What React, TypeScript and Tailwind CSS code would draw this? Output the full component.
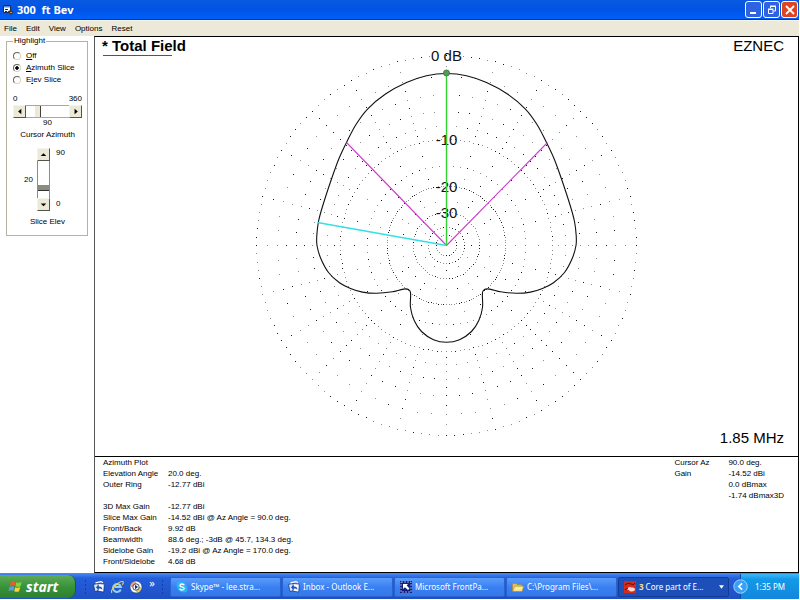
import { useState } from 'react';
import type { ReactNode } from 'react';

const OUTER_RADIUS = 190;

// log scale: every 2 dB shrinks the radius by 0.89
const dbToRadius = (db: number) => OUTER_RADIUS * Math.pow(0.89, db / 2);

// [dB below outer ring, angle step in degrees]
const RINGS: [number, number][] = [
  [0, 2.5],
  [2, 5],
  [4, 5],
  [6, 5],
  [8, 5],
  [10, 2.5],
  [15, 5],
  [20, 2.5],
  [25, 15],
  [30, 5],
  [40, 10],
  [50, 15],
];

const SPOKE_DBS = [1, 2, 3, 4, 5, 6, 7, 8, 9, 12.5, 15, 17.5];
const AXIS_DBS = [22.5, 25, 35];

// left half of the pattern, from the top down to the back lobe
const LOBE: [number, number][] = [
  [0, -172], [-20, -169.8], [-40, -163], [-61, -151.5], [-78.7, -136.7], [-90.5, -121],
  [-100, -103], [-107.5, -87], [-115, -66.5], [-124, -39], [-128, -24], [-129.7, -10],
  [-129.5, 0], [-125.7, 13], [-118, 27], [-107, 37.3], [-96, 43], [-84, 46.6], [-70, 47.8],
  [-54, 46.3], [-43, 43.6], [-38, 43.9], [-36, 47], [-36, 62], [-32.3, 75], [-25, 86],
  [-13, 94.2], [0, 96.8],
];

// Catmull-Rom through the points, tangents scaled by chord length
function buildLobePath() {
  const right = LOBE.slice(1, -1).reverse().map(([x, y]) => [-x, y]);
  const pts = [...LOBE, ...right];
  const n = pts.length;
  const at = (i: number) => pts[(i + n) % n];
  const dist = (a: number[], b: number[]) => Math.hypot(a[0] - b[0], a[1] - b[1]);
  const tangent = (i: number) => {
    const span = dist(at(i - 1), at(i)) + dist(at(i), at(i + 1));
    return [(at(i + 1)[0] - at(i - 1)[0]) / span, (at(i + 1)[1] - at(i - 1)[1]) / span];
  };
  let d = `M${pts[0][0]} ${pts[0][1]}`;
  for (let i = 0; i < n; i++) {
    const a = at(i);
    const b = at(i + 1);
    const len = dist(a, b) / 3;
    const ta = tangent(i);
    const tb = tangent(i + 1);
    d += `C${a[0] + ta[0] * len} ${a[1] + ta[1] * len} ${b[0] - tb[0] * len} ${b[1] - tb[1] * len} ${b[0]} ${b[1]}`;
  }
  return d + 'Z';
}

function buildDots() {
  const seen = new Set<string>();
  let dark = '';
  let light = '';
  const add = (r: number, deg: number) => {
    const a = (deg * Math.PI) / 180;
    const x = Math.round(r * Math.cos(a));
    const y = Math.round(r * Math.sin(a));
    const key = `${x},${y}`;
    if (seen.has(key)) return;
    seen.add(key);
    const dot = `M${x - 0.5} ${y - 0.5}h1v1h-1z`;
    if ((x * 7 + y * 13 + 4000) % 5 < 2) dark += dot;
    else light += dot;
  };
  RINGS.forEach(([db, step]) => {
    for (let deg = 0; deg < 360; deg += step) add(dbToRadius(db), deg);
  });
  for (let deg = 0; deg < 360; deg += 15) {
    SPOKE_DBS.forEach((db) => add(dbToRadius(db), deg));
  }
  for (let deg = 0; deg < 360; deg += 30) {
    AXIS_DBS.forEach((db) => add(dbToRadius(db), deg));
  }
  return { dark, light };
}

const DOTS = buildDots();
const LOBE_PATH = buildLobePath();

const PLOT_LABELS = [
  { text: '0 dB', y: -185 },
  { text: '-10', y: -101 },
  { text: '-20', y: -54 },
  { text: '-30', y: -28 },
];

function PolarPlot() {
  return (
    <svg viewBox="-351.5 -208.5 703 419" className="block w-full h-full" role="img" aria-label="Azimuth plot">
      <path d={DOTS.dark} fill="#1a1a1a" shapeRendering="crispEdges" />
      <path d={DOTS.light} fill="#8c8c8c" shapeRendering="crispEdges" />
      <path d={LOBE_PATH} fill="none" stroke="#111" strokeWidth="1.1" />
      <path d="M0 0L-100 -103M0 0L101 -103" stroke="#cc3fcc" strokeWidth="1.1" />
      <path d="M0 0L-129 -23" stroke="#35dfe6" strokeWidth="1.3" />
      {PLOT_LABELS.map((label) => (
        <text key={label.text} x="0" y={label.y} textAnchor="middle" fontSize="15" fill="#111">
          {label.text}
        </text>
      ))}
      <path d="M0 0V-172" stroke="#32d232" strokeWidth="1.4" />
      <circle cx="0" cy="-172.5" r="3" fill="#3fa84a" stroke="#5c6b5c" />
    </svg>
  );
}

function AppIcon() {
  return (
    <svg viewBox="0 0 12 12" className="w-3 h-3">
      <path d="M1.500 1.500h7v7h-7z" fill="#fff" stroke="#1c2a55" />
      <path d="M2 2h6v1.500H2z" fill="#5b84dc" />
      <path d="M3 5h3v1H3zM3 7h2v1H3z" fill="#222" />
      <path d="M5.500 7.500l3-1.500 3 2-2.500 3z" fill="#2b3c3c" />
      <path d="M8 8h2v1H8z" fill="#d84" />
    </svg>
  );
}

function TitleBar() {
  const btn = 'flex items-center justify-center w-[17px] h-[17px] rounded-[3px] border border-white';
  return (
    <header className="flex items-center h-5 shrink-0 pl-[2px] pr-px bg-linear-to-b from-[#0a5ae0] via-[#0153e4] to-[#0060fb] border-b border-[#0239a8]">
      <AppIcon />
      <h1 className="ml-[3px] flex-1 whitespace-pre text-[11px] leading-4 font-bold text-white font-['Open_Sans',sans-serif]">300  ft Bev</h1>
      <div className="flex gap-px">
        <button type="button" aria-label="Minimize" className={`${btn} bg-[#2f62e0]`}>
          <svg viewBox="0 0 14 14" className="w-[14px] h-[14px]"><path d="M3 9h6v2H3z" fill="#fff" /></svg>
        </button>
        <button type="button" aria-label="Restore" className={`${btn} bg-[#2f62e0]`}>
          <svg viewBox="0 0 14 14" className="w-[14px] h-[14px]" fill="none" stroke="#fff">
            <path d="M5.500 5V3.500h5v4.500h-2M5 3h6" />
            <path d="M3.500 6.500h4.500v4h-4.500zM3 6h5.500" />
          </svg>
        </button>
        <button type="button" aria-label="Close" className={`${btn} bg-[#dd4522]`}>
          <svg viewBox="0 0 14 14" className="w-[14px] h-[14px]"><path d="M3 3l8 8M11 3l-8 8" stroke="#fff" strokeWidth="1.8" /></svg>
        </button>
      </div>
    </header>
  );
}

function MenuBar() {
  return (
    <nav className="flex items-center gap-[9px] h-4 shrink-0 pl-1 bg-[#ece9d8] border-t border-[#f6f5ee] text-[8px] leading-[10px]">
      {['File', 'Edit', 'View', 'Options', 'Reset'].map((item) => (
        <button key={item} type="button">{item}</button>
      ))}
    </nav>
  );
}

const ARROWS = {
  left: 'M8 3v6L4.500 6z',
  right: 'M5 3v6L8.500 6z',
  up: 'M3 7.500h6L6 4.500z',
  down: 'M3 5h6L6 8z',
};

function ArrowButton({ dir, label }: { dir: keyof typeof ARROWS; label: string }) {
  return (
    <button
      type="button"
      aria-label={label}
      className="w-[13px] h-[13px] shrink-0 bg-[#ece9d8] border border-t-[#f6f4ea] border-l-[#f6f4ea] border-b-[#55534a] border-r-[#55534a]"
    >
      <svg viewBox="0 0 12 12" className="block w-[11px] h-[11px]"><path d={ARROWS[dir]} fill="#000" /></svg>
    </button>
  );
}

const MODES = [
  { id: 'off', label: <><u>O</u>ff</> },
  { id: 'azimuth', label: <><u>A</u>zimuth Slice</> },
  { id: 'elev', label: <>E<u>l</u>ev Slice</> },
];

function Sidebar() {
  const [mode, setMode] = useState('azimuth');
  const [azimuth, setAzimuth] = useState(90);
  const [elev, setElev] = useState(20);

  return (
    <aside className="w-[94px] shrink-0 px-[6px] text-[8px] leading-[10px]">
      <fieldset className="w-full min-w-0 border border-[#b5b2a0] pl-[6px] pr-[5px] pb-2">
        <legend className="px-px">Highlight</legend>
        <div className="pt-1">
          {MODES.map((item) => (
            <label key={item.id} className="flex items-center gap-[5px] h-3 whitespace-nowrap">
              <input
                type="radio"
                name="highlight"
                checked={mode === item.id}
                onChange={() => setMode(item.id)}
                className="appearance-none w-2 h-2 shrink-0 rounded-full bg-white border border-t-[#66645c] border-l-[#66645c] border-[#d8d5c4] checked:bg-[radial-gradient(#000_35%,#fff_45%)]"
              />
              <span>{item.label}</span>
            </label>
          ))}
        </div>

        <div className="flex justify-between mt-2">
          <span>0</span>
          <span>360</span>
        </div>
        <div className="flex mt-px">
          <ArrowButton dir="left" label="Decrease azimuth" />
          <input
            id="cursor-azimuth"
            type="range"
            min="0"
            max="360"
            value={azimuth}
            onChange={(e) => setAzimuth(Number(e.target.value))}
            className="appearance-none flex-1 w-0 min-w-0 h-[13px] bg-white border-t border-b border-[#aca899] [&::-webkit-slider-thumb]:appearance-none [&::-webkit-slider-thumb]:w-[6px] [&::-webkit-slider-thumb]:h-[11px] [&::-webkit-slider-thumb]:bg-[#ece9d8] [&::-webkit-slider-thumb]:border-r [&::-webkit-slider-thumb]:border-[#44423a]"
          />
          <ArrowButton dir="right" label="Increase azimuth" />
        </div>
        <div className="text-center">{azimuth}</div>
        <label htmlFor="cursor-azimuth" className="block mt-[2px] text-center whitespace-nowrap">Cursor Azimuth</label>

        <div className="grid grid-cols-[24px_13px_1fr] mt-2">
          <span className="self-center pr-1 text-right">{elev}</span>
          <div className="flex flex-col h-[63px]">
            <ArrowButton dir="up" label="Increase elevation" />
            <input
              id="slice-elev"
              type="range"
              min="0"
              max="90"
              value={elev}
              onChange={(e) => setElev(Number(e.target.value))}
              className="appearance-none [writing-mode:vertical-lr] [direction:rtl] w-[13px] flex-1 h-0 min-h-0 bg-white border-l border-r border-[#8f8c80] [&::-webkit-slider-thumb]:appearance-none [&::-webkit-slider-thumb]:w-[11px] [&::-webkit-slider-thumb]:h-[6px] [&::-webkit-slider-thumb]:bg-[#8b8a84] [&::-webkit-slider-thumb]:border-b [&::-webkit-slider-thumb]:border-[#33322c]"
            />
            <ArrowButton dir="down" label="Decrease elevation" />
          </div>
          <div className="flex flex-col justify-between pl-[6px] pb-[2px]">
            <span>90</span>
            <span>0</span>
          </div>
        </div>
        <label htmlFor="slice-elev" className="block mt-[6px] text-center">Slice Elev</label>
      </fieldset>
    </aside>
  );
}

const LEFT_ROWS = [
  ['Azimuth Plot', ''],
  ['Elevation Angle', '20.0 deg.'],
  ['Outer Ring', '-12.77 dBi'],
  ['', ''],
  ['3D Max Gain', '-12.77 dBi'],
  ['Slice Max Gain', '-14.52 dBi @ Az Angle = 90.0 deg.'],
  ['Front/Back', '9.92 dB'],
  ['Beamwidth', '88.6 deg.; -3dB @ 45.7, 134.3 deg.'],
  ['Sidelobe Gain', '-19.2 dBi @ Az Angle = 170.0 deg.'],
  ['Front/Sidelobe', '4.68 dB'],
];

const RIGHT_ROWS = [
  ['Cursor Az', '90.0 deg.'],
  ['Gain', '-14.52 dBi'],
  ['', '0.0 dBmax'],
  ['', '-1.74 dBmax3D'],
];

function DataTable({ rows, headWidth }: { rows: string[][]; headWidth: string }) {
  return (
    <table className="self-start whitespace-nowrap text-left">
      <tbody>
        {rows.map(([name, value], i) => (
          <tr key={i} className="h-[11px]">
            <th scope="row" className={`p-0 font-normal ${headWidth}`}>{name}</th>
            <td className="p-0">{value}</td>
          </tr>
        ))}
      </tbody>
    </table>
  );
}

function PlotPanel() {
  return (
    <main className="flex flex-col flex-1 min-w-0 border border-black border-l-[#555]">
      <section className="relative flex-1 min-h-0">
        <PolarPlot />
        <h2 className="absolute left-[7px] top-0 pr-4 text-[15px] leading-[18px] font-bold">
          * Total Field
        </h2>
        <hr className="absolute left-2 top-[18px] w-[69px] border-[#555]" />
        <div className="absolute right-[14px] top-0 text-[15px] leading-[18px]">EZNEC</div>
        <div className="absolute right-[14px] bottom-[9px] text-[15px] leading-[18px]">1.85 MHz</div>
      </section>
      <section className="flex justify-between pl-2 pr-[14px] pb-[5px] border-t border-black text-[8px] leading-[11px]">
        <DataTable rows={LEFT_ROWS} headWidth="w-[65px] min-w-[65px]" />
        <DataTable rows={RIGHT_ROWS} headWidth="w-[54px] min-w-[54px]" />
      </section>
    </main>
  );
}

function WindowsFlag() {
  return (
    <svg viewBox="0 0 15 16" className="w-[15px] h-[15px]">
      <path d="M2.500 3.200Q5 1.500 7.500 3L6.500 7.300Q4 6 1.300 7.500z" fill="#ee5a2a" />
      <path d="M8.400 3.400Q11 4.800 14 3.200L12.800 7.600Q10 9 7.400 7.700z" fill="#8ccf3c" />
      <path d="M1.100 8.400Q3.700 7 6.300 8.300L5.200 12.600Q2.800 11.300 0 12.800z" fill="#5a9af0" />
      <path d="M7.200 8.700Q9.800 10 12.500 8.600L11.300 13Q8.700 14.400 6.100 13z" fill="#fbd038" />
    </svg>
  );
}

function OutlookIcon() {
  return (
    <svg viewBox="0 0 12 12" className="w-3 h-3 shrink-0">
      <path d="M.5 3.500L6 2.200 7.500 9 2 10.500z" fill="#dce9fb" stroke="#0d2f7c" strokeWidth=".7" />
      <path d="M5 2.500l6.300.6-.6 8-5.700-1z" fill="#fff" stroke="#0d2f7c" strokeWidth=".7" />
      <path d="M2.500 1.800L8 .6l2 1.200" fill="none" stroke="#fff" strokeWidth="1.200" />
      <path d="M2.800 6.300L5.800 4v1.500q3.400-.4 3.600 3.200Q8 7.300 5.800 7.500V9z" fill="#1b55c4" />
    </svg>
  );
}

function ExplorerIcon() {
  return (
    <svg viewBox="0 0 14 14" className="w-[14px] h-[14px]" fill="none">
      <path d="M10.700 9.500A4 4 0 1 1 10.900 7H4.500" stroke="#8ed2fc" strokeWidth="2" />
      <path d="M2 12.800C-.5 10 9 .8 12.800 1.500q1.200.6-.5 3.300" stroke="#f6cf4a" strokeWidth="1.100" />
    </svg>
  );
}

function MediaIcon() {
  return (
    <svg viewBox="0 0 14 14" className="w-[14px] h-[14px]">
      <circle cx="7" cy="7" r="6" fill="#f6f8fb" stroke="#1a3a80" strokeWidth=".6" />
      <path d="M7 1.500A5.500 5.500 0 0 0 1.500 7H4a3 3 0 0 1 3-3z" fill="#f0a070" />
      <path d="M12.500 7A5.500 5.500 0 0 1 7 12.500V10a3 3 0 0 0 3-3z" fill="#e9c95c" />
      <circle cx="7" cy="7" r="3.200" fill="#fff" stroke="#223" strokeWidth=".8" />
      <path d="M6 4.800v4.400L9 7z" fill="#15307a" />
    </svg>
  );
}

function SkypeIcon() {
  return (
    <svg viewBox="0 0 12 12" className="w-3 h-3 shrink-0">
      <circle cx="4" cy="4" r="3.500" fill="#27b4f4" />
      <circle cx="8" cy="8" r="3.500" fill="#27b4f4" />
      <circle cx="6" cy="6" r="4.800" fill="#27b4f4" />
      <path d="M8.200 4.200Q7.700 3 6 3T4 4.400Q4 5.500 6 5.900T8.200 7.500Q8 9 6 9T3.800 7.700" fill="none" stroke="#fff" strokeWidth="1.400" />
    </svg>
  );
}

function FrontPageIcon() {
  return (
    <svg viewBox="0 0 12 12" className="w-3 h-3 shrink-0">
      <path d="M0 0h12v12H0z" fill="#10207c" />
      <path d="M1 1h10v10H1z" fill="none" stroke="#b9c8f4" strokeWidth=".8" strokeDasharray="2 1" />
      <path d="M3 3h5L6.700 4.500 9.500 7.500 8 9 4.900 6.200 3 8z" fill="#fff" />
    </svg>
  );
}

function FolderIcon() {
  return (
    <svg viewBox="0 0 12 12" className="w-3 h-3 shrink-0">
      <path d="M.5 10V2.500h3.800l1 1.300h4.700V10z" fill="#e9c04e" stroke="#a8842a" strokeWidth=".6" />
      <path d="M.7 10.300L2.800 5.300H11.700L10 10.300z" fill="#fdeb96" stroke="#b8922e" strokeWidth=".6" />
    </svg>
  );
}

function EznecIcon() {
  return (
    <svg viewBox="0 0 12 12" className="w-3 h-3 shrink-0">
      <path d="M0 0h12v12H0z" fill="#d42c1c" />
      <path d="M1 4Q4 1 7 3T11 2" fill="none" stroke="#601010" />
      <path d="M3 7.500Q5 5 7.500 6.500q3-.5 3.500 1.500 0 2.500-3.500 2.500-2.500 0-2.500-1.500-2 0-2-1.500z" fill="#fbd8d8" />
      <path d="M1 9l3-2" stroke="#5a0c0c" />
    </svg>
  );
}

function Grip() {
  return <div className="w-1 h-4 shrink-0 bg-[radial-gradient(#123f9c_40%,transparent_45%)] bg-[length:3px_4px]" />;
}

function TaskButton({ icon, children, active }: { icon: ReactNode; children: ReactNode; active?: boolean }) {
  const tone = active
    ? 'bg-[#1d4fb8] border-[#163c92]'
    : 'bg-linear-to-b from-[#5a9cfa] via-[#3a80f2] to-[#3578ea] border-[#2a62d0]';
  return (
    <button type="button" className={`flex items-center gap-[3px] flex-1 min-w-0 h-5 pl-[5px] pr-1 rounded-[2px] border text-white text-left ${tone}`}>
      {icon}
      <span className="flex-1 whitespace-nowrap">{children}</span>
      {active && <svg viewBox="0 0 6 4" className="w-[5px] h-1 shrink-0"><path d="M0 0h6L3 4z" fill="#fff" /></svg>}
    </button>
  );
}

function Taskbar() {
  return (
    <footer className="flex items-center h-[26px] shrink-0 pt-px bg-linear-to-b from-[#4a8cf4] via-[#245edb] via-20% to-[#1f50c4] text-[8px] leading-[12px] font-['Noto_Sans',sans-serif]">
      <button
        type="button"
        className="flex items-center gap-[3px] w-[76px] h-[23px] shrink-0 pl-2 rounded-r-lg bg-linear-to-b from-[#5eac5c] via-[#389438] to-[#2f7f2f] border-r border-[#1f5a2a] text-white"
      >
        <WindowsFlag />
        <span className="text-[14px] leading-4 font-bold italic">start</span>
      </button>
      <div className="flex items-center gap-1 w-[94px] shrink-0 pl-2 pr-[5px]">
        <Grip />
        <button type="button" aria-label="Outlook Express" className="ml-px"><OutlookIcon /></button>
        <button type="button" aria-label="Internet Explorer" className="ml-px"><ExplorerIcon /></button>
        <button type="button" aria-label="Media Player" className="ml-px"><MediaIcon /></button>
        <span className="flex-1 -mt-2 text-center text-[11px] leading-3 text-white">»</span>
        <Grip />
      </div>
      <div className="flex flex-1 min-w-0 gap-px">
        <TaskButton icon={<SkypeIcon />}>Skype™ - lee.stra...</TaskButton>
        <TaskButton icon={<OutlookIcon />}>Inbox - Outlook E...</TaskButton>
        <TaskButton icon={<FrontPageIcon />}>Microsoft FrontPa...</TaskButton>
        <TaskButton icon={<FolderIcon />}>C:\Program Files\...</TaskButton>
        <TaskButton icon={<EznecIcon />} active><b className="text-[#ffe28a]">3</b> Core part of E...</TaskButton>
      </div>
      <div className="flex items-center self-stretch shrink-0 pl-1">
        <button type="button" aria-label="Show hidden icons" className="relative z-10">
          <svg viewBox="0 0 14 14" className="w-[15px] h-[15px]">
            <circle cx="7" cy="7" r="6.300" fill="#3aa0f4" stroke="#b4dcff" strokeWidth=".8" />
            <path d="M8.500 4L5.500 7l3 3" fill="none" stroke="#fff" strokeWidth="1.600" />
          </svg>
        </button>
        <div className="flex items-center self-stretch -ml-2 pl-[14px] pr-[14px] bg-linear-to-b from-[#3fb8f8] via-[#139ae8] via-20% to-[#1286dc] border-l border-[#0d4fa8] text-white">
          1:35 PM
        </div>
      </div>
    </footer>
  );
}

export default function App() {
  return (
    <div className="flex flex-col h-screen pr-px pb-px bg-white text-black font-['Liberation_Sans',Arial,sans-serif]">
      <TitleBar />
      <MenuBar />
      <div className="flex flex-1 min-h-0">
        <Sidebar />
        <PlotPanel />
      </div>
      <Taskbar />
    </div>
  );
}
